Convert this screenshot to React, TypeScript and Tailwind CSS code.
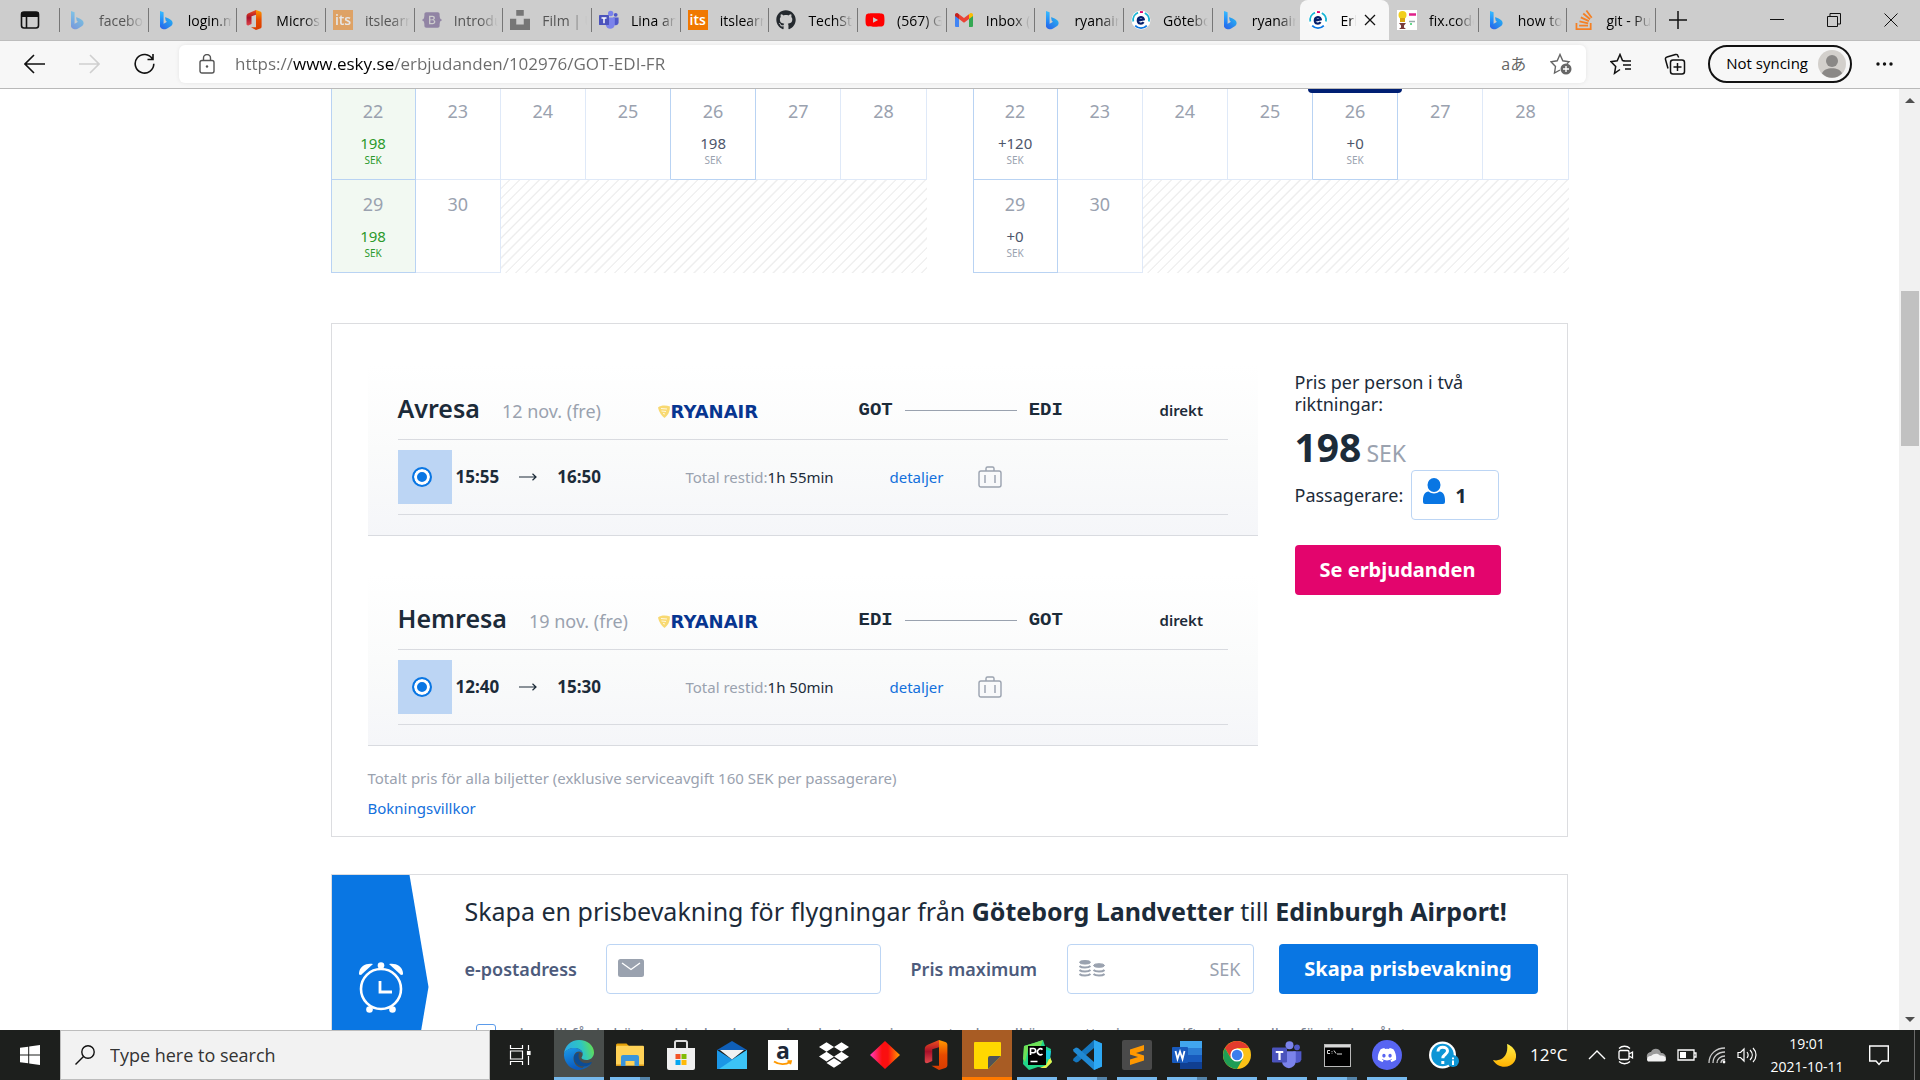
import type { ReactNode } from "react";
import { FaDropbox, FaGithub, FaYoutube, FaDiscord, FaBootstrap } from "react-icons/fa";
import { SiStackoverflow, SiUnsplash } from "react-icons/si";

/* ---------- favicons and app icons ---------- */

const Bing = () => (
  <svg viewBox="0 0 20 20" className="size-5">
    <defs>
      <linearGradient id="bingA" x1="0" y1="0" x2="0" y2="1">
        <stop offset="0" stopColor="#37bdff" />
        <stop offset="1" stopColor="#1b6cf2" />
      </linearGradient>
      <linearGradient id="bingB" x1="1" y1="0" x2="0" y2="1">
        <stop offset="0" stopColor="#26b8f4" />
        <stop offset="1" stopColor="#2a5de8" />
      </linearGradient>
    </defs>
    <path d="M4 1l3.6 1.3v12L4 17z" fill="url(#bingA)" />
    <path d="M9 7.2c3 .8 7.600 2.300 7.600 5.800 0 2.800-2.500 3.600-4.600 4.900-1.500 1-2.800 1.700-4.600 1.400C5.300 19 4 17.600 4 15.500l5-2.600 2-1.200-1.200-.7z" fill="url(#bingB)" />
  </svg>
);

const Office = ({ className = "size-5" }: { className?: string }) => (
  <svg viewBox="0 0 20 20" className={className}>
    <defs>
      <linearGradient id="offA" x1="0" y1="0" x2="0" y2="1">
        <stop offset="0" stopColor="#f0501e" />
        <stop offset=".5" stopColor="#a8102a" />
        <stop offset="1" stopColor="#e0484c" />
      </linearGradient>
      <linearGradient id="offB" x1="0" y1="0" x2="0" y2="1">
        <stop offset="0" stopColor="#ff9a00" />
        <stop offset=".5" stopColor="#e64a00" />
        <stop offset="1" stopColor="#d83b01" />
      </linearGradient>
    </defs>
    <path d="M12 0l-7.500 3.200C3.200 3.800 2.500 4.700 2.500 6v8c0 1.500 1.400 1.700 2.400 1.200L7.500 14V6.200L12 4.800z" fill="url(#offA)" />
    <path d="M12 0l4.200 1.400c1 .4 1.400 1 1.400 2v13.200c0 1-.4 1.600-1.400 2L12 20 7 17.200h5z" fill="url(#offB)" />
  </svg>
);

const Its = ({ className = "size-5" }: { className?: string }) => (
  <span className={`${className} flex shrink-0 items-center justify-center bg-[#f07800] text-[14px] leading-none font-semibold text-white`}>its</span>
);

const Teams = ({ className = "size-5" }: { className?: string }) => (
  <svg viewBox="0 0 24 24" className={className}>
    <circle cx="20" cy="5.800" r="2.300" fill="#5059c9" />
    <path d="M17 9h6.500v6.500a3.500 3.500 0 0 1-6.500 1z" fill="#5059c9" />
    <circle cx="14" cy="4.200" r="3.200" fill="#7b83eb" />
    <path d="M8 9h11v8a5.500 5.500 0 0 1-11 0z" fill="#7b83eb" />
    <rect x="0" y="6" width="12" height="12" rx="1" fill="#4b53bc" />
    <path d="M3 8.800h6v1.600H6.900V16H5.100v-5.600H3z" fill="#fff" />
  </svg>
);

const Gmail = () => (
  <svg viewBox="0 0 20 20" className="size-5">
    <path d="M1 5.500V16a1 1 0 0 0 1 1h3V8.300z" fill="#4285f4" />
    <path d="M19 5.500V16a1 1 0 0 1-1 1h-3V8.300z" fill="#34a853" />
    <path d="M15 4.300V9l4-3V4.800c0-1.700-1.900-2.400-3-1.400z" fill="#fbbc04" />
    <path d="M5 9V4.300L10 8l5-3.700V9l-5 3.800z" fill="#ea4335" />
    <path d="M1 4.800V6l4 3V4.300l-1-.9C2.900 2.400 1 3.100 1 4.800z" fill="#c5221f" />
  </svg>
);

const Esky = () => (
  <svg viewBox="0 0 20 20" className="size-5">
    <circle cx="10" cy="10" r="9.500" fill="#fff" />
    <g fill="none" strokeWidth="1.800">
      <path d="M2.300 11.500A8 8 0 0 1 7 2.600" stroke="#18b5d6" />
      <path d="M13.800 3a8 8 0 0 1 4.100 8.500" stroke="#18b5d6" />
      <path d="M9 2l3 .2" stroke="#e3056d" />
      <path d="M4.200 15.600a8 8 0 0 0 11.600 0" stroke="#0976e3" />
      <path d="M6.800 10.600l6-1.200c-.3-3.400-5.800-3.200-6 1 0 3.600 4 4.200 5.800 1.800" stroke="#041e6b" strokeWidth="2.200" />
    </g>
  </svg>
);

const FixCode = () => (
  <svg viewBox="0 0 20 20" className="size-5">
    <rect width="20" height="20" fill="#fff" />
    <circle cx="5.500" cy="5" r="4" fill="#f2cf1c" />
    <rect x="3" y="8" width="5" height="4" fill="#d9a514" />
    <path d="M2 13h7l-2 2.500v2l2 1.500H2l2-1.500v-2z" fill="#7a3b3b" />
    <path d="M12 4.500h7" stroke="#e0218a" strokeWidth="2.500" />
    <path d="M12 11.500h6" stroke="#9aa" strokeWidth="1.500" />
    <path d="M13 14h2" stroke="#3c6" strokeWidth="1.500" />
  </svg>
);

const EdgeLogo = () => (
  <svg viewBox="0 0 30 30" className="size-[30px]">
    <defs>
      <linearGradient id="edA" x1="0" y1=".5" x2="1" y2=".3">
        <stop offset="0" stopColor="#2aa8ea" />
        <stop offset=".6" stopColor="#2fc6c0" />
        <stop offset="1" stopColor="#66e04c" />
      </linearGradient>
      <linearGradient id="edB" x1="0" y1="0" x2=".3" y2="1">
        <stop offset="0" stopColor="#1c9be8" />
        <stop offset="1" stopColor="#0a5bc0" />
      </linearGradient>
    </defs>
    <path d="M0 14C.5 6 7 0 15 0c9 0 15 6 15 12.500 0 5-4 7.500-7.500 7.500-3.200 0-5-1.200-5-2.200 0-.8 1.200-1.300 1.200-3.800C18.700 10.500 15 8 10.500 8 5 8 1 11 0 14z" fill="url(#edA)" />
    <path d="M0 14c1-3.500 5-6 10.500-6 4.500 0 8.200 2.500 8.200 6 0-1-1.500-2.500-3.700-2.500-3.500 0-5.500 3.500-5.500 7 0 5 4 9.500 9.500 9.500-1.200 1-3 2-5 2C6 29.500-.5 22 0 14z" fill="url(#edB)" />
    <path d="M10 17.500c0 6 5 9 10 9 3 0 6-1.200 7.500-3.500.5-.8 0-1.200-.8-.8-6 2.800-12.200-.7-12.200-6.200 0-1.500.5-2.500 1-3.500-3 .3-5.500 2-5.500 5z" fill="#0c4c94" />
    <path d="M20 26.500c-1.500 1.800-3.500 3-6 3 5 .8 11-2 13.500-6.500-2 2.300-4.500 3.500-7.500 3.500z" fill="#1460ae" />
  </svg>
);

const Explorer = () => (
  <svg viewBox="0 0 30 26" className="h-[26px] w-[30px]">
    <path d="M1 3a1.500 1.500 0 0 1 1.500-1.500h9L14 4h-13z" fill="#e3a008" />
    <rect x="1" y="3.800" width="28" height="20" rx="1" fill="#ffd257" />
    <path d="M6 24v-9a2 2 0 0 1 2-2h14a2 2 0 0 1 2 2v9h-4.500v-5h-9v5z" fill="#3a95dc" />
    <rect x="1" y="22.500" width="5" height="1.500" fill="#d99a1c" />
    <rect x="24" y="22.500" width="5" height="1.500" fill="#d99a1c" />
  </svg>
);

const Store = () => (
  <svg viewBox="0 0 30 30" className="size-[30px]">
    <path d="M9 9V2.500A1.500 1.500 0 0 1 10.500 1h9A1.500 1.500 0 0 1 21 2.500V9" fill="none" stroke="#ddd" strokeWidth="2" />
    <path d="M1 8h28v20a2 2 0 0 1-2 2H3a2 2 0 0 1-2-2z" fill="#f0f0f0" />
    <rect x="9.500" y="14" width="5" height="5" fill="#f35325" />
    <rect x="15.500" y="14" width="5" height="5" fill="#81bc06" />
    <rect x="9.500" y="20" width="5" height="5" fill="#05a6f0" />
    <rect x="15.500" y="20" width="5" height="5" fill="#ffba08" />
  </svg>
);

const Mail = () => (
  <svg viewBox="0 0 30 28" className="h-7 w-[30px]">
    <path d="M0 9L15 0l15 9z" fill="#0f5fb8" />
    <path d="M0 9l15 9.500L30 9v19H0z" fill="#1b96e6" />
    <path d="M30 9v19H2z" fill="#3cc4f6" />
    <path d="M3 9h24L15 18.500z" fill="#f2f2f2" />
  </svg>
);

const Amazon = () => (
  <span className="relative flex size-[30px] items-start justify-center bg-white">
    <span className="text-[23px] leading-[21px] font-bold text-[#1d2838]">a</span>
    <svg viewBox="0 0 20 6" className="absolute bottom-1 h-[6px] w-5">
      <path d="M1 1.500c5 3.500 12 3.500 16 .5M14.500 1.200h3.500l-.8 3" fill="none" stroke="#f90" strokeWidth="1.800" />
    </svg>
  </span>
);

const Diamond = () => (
  <svg viewBox="0 0 30 30" className="size-[30px]">
    <defs>
      <linearGradient id="diaA" x1="0" y1="0" x2="1" y2="0">
        <stop offset="0" stopColor="#ff3cc0" />
        <stop offset=".4" stopColor="#fa0f10" />
        <stop offset=".6" stopColor="#fa0f10" />
        <stop offset="1" stopColor="#ffa000" />
      </linearGradient>
    </defs>
    <path d="M15 1l15 14-15 14L0 15z" fill="url(#diaA)" />
  </svg>
);

const Sticky = () => (
  <svg viewBox="0 0 27 27" className="size-[27px]">
    <path d="M0 1a1 1 0 0 1 1-1h25a1 1 0 0 1 1 1v13L14 27H1a1 1 0 0 1-1-1z" fill="#ffd800" />
    <path d="M27 14H16a2 2 0 0 0-2 2v11z" fill="#4f5358" />
  </svg>
);

const PyCharm = () => (
  <svg viewBox="0 0 30 30" className="size-[30px]">
    <path d="M2 6L12 3l9-3 2 6 6 3-1 8 2 5-6 6-8-1-9 3-6-6z" fill="#21d789" />
    <path d="M2 6L12 3l9-3-3 8-12 2-3 12-2-3z" fill="#6ee055" />
    <path d="M18 28l6 0 6-6-2-5-4 8z" fill="#e8f04a" />
    <path d="M24 10l5 1-1 8-4 0z" fill="#18c9dc" />
    <rect x="6" y="6" width="18" height="19" fill="#000" />
    <path d="M8.500 15V8.500h3a2 2 0 0 1 0 4.200H8.500M20.500 9.600a3 3 0 1 0 0 4.400M8.500 21.500h7" fill="none" stroke="#fff" strokeWidth="1.600" />
  </svg>
);

const VsCode = () => (
  <svg viewBox="0 0 30 30" className="size-[30px]">
    <path d="M22 0l8 3.500v8L22 8 6 22l-2 .5L1 20.500l.5-2z" fill="#1577bf" />
    <path d="M22 30l8-3.500v-8L22 22 6 8l-2-.5L1 9.500l.5 2z" fill="#2089d2" />
    <path d="M22 0l8 3.500v23L22 30z" fill="#2ea8f3" />
  </svg>
);

const Sublime = () => (
  <svg viewBox="0 0 30 30" className="size-[30px]">
    <rect width="30" height="30" rx="2" fill="#4a4a4a" />
    <path d="M22 5v5.500l-8 2.500 8 2.500v5L8 25v-5.500l8-2.500-8-2.500v-5z" fill="#ff9800" />
  </svg>
);

const Word = () => (
  <svg viewBox="0 0 30 28" className="h-7 w-[30px]">
    <path d="M8 0h22v7H8z" fill="#41a5ee" />
    <path d="M8 7h22v7H8z" fill="#2b7cd3" />
    <path d="M8 14h22v7H8z" fill="#185abd" />
    <path d="M8 21h22v7H8z" fill="#103f91" />
    <rect x="0" y="6" width="16" height="16" rx="1" fill="#185abd" />
    <path d="M3.500 10l2 8 2.500-7.500 2.500 7.500 2-8" fill="none" stroke="#fff" strokeWidth="1.800" />
  </svg>
);

const Chrome = () => (
  <svg viewBox="0 0 28 28" className="size-7">
    <circle cx="14" cy="14" r="14" fill="#fbc116" />
    <path d="M14 7h12.100A14 14 0 0 0 1.900 7l6 10z" fill="#e33b2e" />
    <path d="M1.900 7A14 14 0 0 0 14 28l6-10.500-12 0z" fill="#1f9d55" />
    <circle cx="14" cy="14" r="6.600" fill="#fff" />
    <circle cx="14" cy="14" r="5.200" fill="#3b7ded" />
  </svg>
);

const Cmd = () => (
  <svg viewBox="0 0 27 23" className="h-[23px] w-[27px]">
    <rect x=".5" y=".5" width="26" height="22" fill="#000" stroke="#b9b9b9" />
    <path d="M1 1h25v2.500H1z" fill="#d8d8d8" />
    <path d="M6 6.500H3.500v3H6M8 7v.8M8 8.800v.7M10 6.500l2 3M13 10h5" stroke="#ddd" fill="none" />
  </svg>
);

const Help = () => (
  <svg viewBox="0 0 30 28" className="h-7 w-[30px]">
    <circle cx="13.500" cy="14" r="13.500" fill="#fff" />
    <circle cx="13.500" cy="14" r="11.200" fill="#0d96d6" />
    <path d="M9 10.500c0-6 9.500-5.500 9.500-.5 0 3.500-4.700 3.500-4.700 7.200M13.800 20v3" fill="none" stroke="#fff" strokeWidth="3" />
    <circle cx="24" cy="20" r="6" fill="#0d96d6" />
    <path d="M24 16.500v1.800M24 19.500v4.500" stroke="#fff" strokeWidth="2" />
  </svg>
);

/* ---------- browser chrome ---------- */

type Tab = { title: string; icon: ReactNode; asleep?: boolean; active?: boolean };

const tabs: Tab[] = [
  { title: "facebook", icon: <Bing />, asleep: true },
  { title: "login.mi", icon: <Bing /> },
  { title: "Microso", icon: <Office /> },
  { title: "itslearn", icon: <Its />, asleep: true },
  { title: "Introdu", icon: <FaBootstrap className="size-5 text-[#563d7c]" />, asleep: true },
  { title: "Film | U", icon: <SiUnsplash className="size-5 text-[#222]" />, asleep: true },
  { title: "Lina an", icon: <Teams /> },
  { title: "itslearn", icon: <Its /> },
  { title: "TechSta", icon: <FaGithub className="size-5 text-[#24292e]" /> },
  { title: "(567) G", icon: <FaYoutube className="size-5 text-[#f00]" /> },
  { title: "Inbox (", icon: <Gmail /> },
  { title: "ryanair", icon: <Bing /> },
  { title: "Götebo", icon: <Esky /> },
  { title: "ryanair", icon: <Bing /> },
  { title: "Erb", icon: <Esky />, active: true },
  { title: "fix.code", icon: <FixCode /> },
  { title: "how to", icon: <Bing /> },
  { title: "git - Pu", icon: <SiStackoverflow className="size-5 text-[#f48024]" /> },
];

const fade = "[mask-image:linear-gradient(to_right,black_60%,transparent)]";

function TabItem({ tab, sep }: { tab: Tab; sep: boolean }) {
  if (tab.active) {
    return (
      <div className="flex h-10 min-w-0 flex-1 items-center rounded-t-lg bg-[#f7f7f7]">
        <span className="ml-2 shrink-0">{tab.icon}</span>
        <span className={`ml-3 w-4 overflow-hidden whitespace-nowrap ${fade}`}>{tab.title}</span>
        <button aria-label="Close tab" className="ml-1 flex size-5 shrink-0 items-center justify-center">
          <svg viewBox="0 0 12 12" className="size-3" stroke="#111" strokeWidth="1.300">
            <path d="M1 1l10 10M11 1L1 11" />
          </svg>
        </button>
      </div>
    );
  }
  return (
    <button className="flex h-10 min-w-0 flex-1 items-center">
      <span className={`h-6 w-px shrink-0 ${sep ? "bg-[#777]" : "bg-transparent"}`} />
      <span className={`ml-[7px] shrink-0 ${tab.asleep ? "opacity-50" : ""}`}>{tab.icon}</span>
      <span className={`ml-3 mr-1 min-w-0 flex-1 overflow-hidden text-left whitespace-nowrap ${fade} ${tab.asleep ? "text-[#555]" : ""}`}>
        {tab.title}
      </span>
    </button>
  );
}

function TabStrip() {
  return (
    <div className="flex h-10 shrink-0 items-center bg-[#cdcdcd] text-[14px] text-black">
      <button aria-label="Tab actions" className="flex w-[59px] shrink-0 items-center justify-center">
        <svg viewBox="0 0 20 20" className="size-5" fill="none" stroke="#111" strokeWidth="1.600">
          <rect x="1.500" y="2" width="17" height="16" rx="2.500" />
          <path d="M1.500 4.500h17" strokeWidth="5" />
          <path d="M6.500 6v12" />
        </svg>
      </button>
      <div className="flex max-w-[1596px] min-w-0 flex-1">
        {tabs.map((t, i) => (
          <TabItem key={i} tab={t} sep={!tabs[i - 1]?.active} />
        ))}
      </div>
      <span className="h-6 w-px bg-[#777]" />
      <button aria-label="New tab" className="ml-[13px]">
        <svg viewBox="0 0 18 18" className="size-[18px]" stroke="#111" strokeWidth="1.500">
          <path d="M9 0v18M0 9h18" />
        </svg>
      </button>
      <div className="ml-auto flex items-center gap-[43px] pr-[22px]">
        <button aria-label="Minimize">
          <svg viewBox="0 0 14 14" className="size-[14px]" stroke="#111"><path d="M0 6.500h14" /></svg>
        </button>
        <button aria-label="Restore">
          <svg viewBox="0 0 14 14" className="size-[14px]" fill="none" stroke="#111">
            <path d="M.5 3.500h10v10H.5zM3 3V.5h10.500V11H11" />
          </svg>
        </button>
        <button aria-label="Close">
          <svg viewBox="0 0 14 14" className="size-[14px]" stroke="#111"><path d="M.5.500l13 13M13.500.500l-13 13" /></svg>
        </button>
      </div>
    </div>
  );
}

function Toolbar() {
  return (
    <div className="flex h-[49px] shrink-0 items-center border-t border-b border-t-[#bdbdbd] border-b-[#b9b9b9] bg-[#f7f7f7] pr-[27px] pb-[2px] pl-6">
      <button aria-label="Back">
        <svg viewBox="0 0 21 20" className="h-5 w-[21px]" fill="none" stroke="#111" strokeWidth="1.600"><path d="M21 10H1.500M10 1l-9 9 9 9" /></svg>
      </button>
      <button aria-label="Forward" className="ml-[34px]" disabled>
        <svg viewBox="0 0 21 20" className="h-5 w-[21px]" fill="none" stroke="#cfcfcf" strokeWidth="1.600"><path d="M0 10h19.500M11 1l9 9-9 9" /></svg>
      </button>
      <button aria-label="Refresh" className="ml-[34px]">
        <svg viewBox="0 0 21 21" className="size-[21px]" fill="none" stroke="#111" strokeWidth="1.600"><path d="M18.500 6a9.300 9.300 0 1 0 1.300 4.700M19 1v5.500h-5.500" /></svg>
      </button>
      <div className="ml-6 flex h-[38px] min-w-0 flex-1 items-center rounded-md bg-white pr-[14px] pl-5 shadow-[0_0_4px_rgba(0,0,0,0.08)]">
        <svg viewBox="0 0 16 20" className="h-5 w-4 shrink-0" fill="none" stroke="#555" strokeWidth="1.400">
          <rect x="1" y="6.500" width="14" height="12.500" rx="2" />
          <path d="M4.500 6.500V4a3.500 3.500 0 0 1 7 0v2.500" />
          <circle cx="8" cy="12.500" r="1.200" fill="#555" stroke="none" />
        </svg>
        <input
          aria-label="Address"
          defaultValue="https://www.esky.se/erbjudanden/102976/GOT-EDI-FR"
          className="ml-5 min-w-0 flex-1 bg-[linear-gradient(to_right,#6b6b6b_58px,#000_58px,#000_159px,#6b6b6b_159px)] bg-clip-text text-[17px] text-transparent outline-none"
        />
        <button aria-label="Translate" className="text-[16px] leading-none text-[#666]">aあ</button>
        <button aria-label="Add to favorites" className="ml-6">
          <svg viewBox="0 0 22 22" className="size-[22px]" fill="none" stroke="#666" strokeWidth="1.400">
            <path d="M10 17l-5.500 3 1-6.500L1 8.700l6.200-.9L10 1.500l2.800 6.300 6.200.9-2 2" />
            <circle cx="16" cy="16" r="5.500" fill="#666" stroke="none" />
            <path d="M16 13v6M13 16h6" stroke="#fff" />
          </svg>
        </button>
      </div>
      <button aria-label="Favorites" className="ml-6">
        <svg viewBox="0 0 22 22" className="size-[22px]" fill="none" stroke="#111" strokeWidth="1.500">
          <path d="M10 16.500l-5.500 3.800 1.200-6.800L1 8.700l6.200-.9L10 1.500l2.500 6 2 .3M13 8h8M13 12h8M15 16h6" />
        </svg>
      </button>
      <button aria-label="Collections" className="ml-8">
        <svg viewBox="0 0 22 22" className="size-[22px]" fill="none" stroke="#111" strokeWidth="1.500">
          <rect x="6.500" y="7" width="14" height="14" rx="2.500" />
          <path d="M13.500 10v8M9.500 14h8M4 15.500L1.500 6.500A2 2 0 0 1 3 4l8.500-2.500A2 2 0 0 1 14 3l.7 1.500" />
        </svg>
      </button>
      <button className="ml-[22px] flex h-[38px] items-center rounded-full border-2 border-[#111] pr-1 pl-4 text-[15px] text-black">
        Not syncing
        <svg viewBox="0 0 28 28" className="ml-[10px] size-7">
          <circle cx="14" cy="14" r="14" fill="#d3d0cc" />
          <circle cx="14" cy="11" r="6" fill="#8a8886" />
          <path d="M4 23.500c2-7 18-7 20 0a14 14 0 0 1-20 0z" fill="#8a8886" />
        </svg>
      </button>
      <button aria-label="Settings and more" className="ml-6">
        <svg viewBox="0 0 17 4" className="h-1 w-[17px]" fill="#111"><circle cx="2" cy="2" r="1.700" /><circle cx="8.500" cy="2" r="1.700" /><circle cx="15" cy="2" r="1.700" /></svg>
      </button>
    </div>
  );
}

/* ---------- price calendar ---------- */

type Day = { day: number; price?: string; cheap?: boolean; selected?: boolean };

function DayCell({ d, next, first, top }: { d: Day; next?: Day; first: boolean; top: boolean }) {
  const priced = d.price !== undefined;
  const right = priced || next?.price !== undefined ? "border-r-[#b9d3f3]" : "border-r-[#dfe9f8]";
  const bottom = priced ? "border-b-[#b9d3f3]" : "border-b-[#dfe9f8]";
  return (
    <td className={`relative border-r border-b p-0 align-top ${right} ${bottom} ${first ? "border-l border-l-[#b9d3f3]" : ""} ${d.cheap ? "bg-[#f2f9f2]" : ""}`}>
      {d.selected && <span className="absolute inset-x-[-5px] top-0 h-1 rounded-b-md bg-[#001f73]" />}
      <div className={`text-center ${top ? "h-[90px] pt-[10px]" : "h-[92px] pt-3"}`}>
        <div className="text-[18px] leading-6 text-[#9aa2af]">{d.day}</div>
        {priced && (
          <>
            <div className={`mt-[10px] text-[15px] leading-5 ${d.cheap ? "text-[#2c9a2c]" : "text-[#4d566b]"}`}>{d.price}</div>
            <div className={`text-[10px] leading-[14px] ${d.cheap ? "text-[#2c9a2c]" : "text-[#9aa2af]"}`}>SEK</div>
          </>
        )}
      </div>
    </td>
  );
}

function Calendar({ label, weeks }: { label: string; weeks: Day[][] }) {
  return (
    <table aria-label={label} className="w-full table-fixed border-separate border-spacing-0">
      <tbody>
        {weeks.map((week, i) => (
          <tr key={i}>
            {week.map((d, j) => (
              <DayCell key={d.day} d={d} next={week[j + 1]} first={j === 0} top={i === 0} />
            ))}
            {week.length < 7 && (
              <td colSpan={7 - week.length} className="bg-[repeating-linear-gradient(135deg,#fff_0px,#fff_5px,#ededed_6px,#f6f6f6_7px)]" />
            )}
          </tr>
        ))}
      </tbody>
    </table>
  );
}

const outbound: Day[][] = [
  [{ day: 22, price: "198", cheap: true }, { day: 23 }, { day: 24 }, { day: 25 }, { day: 26, price: "198" }, { day: 27 }, { day: 28 }],
  [{ day: 29, price: "198", cheap: true }, { day: 30 }],
];
const inbound: Day[][] = [
  [{ day: 22, price: "+120" }, { day: 23 }, { day: 24 }, { day: 25 }, { day: 26, price: "+0", selected: true }, { day: 27 }, { day: 28 }],
  [{ day: 29, price: "+0" }, { day: 30 }],
];

/* ---------- flight offer ---------- */

type LegData = { title: string; date: string; from: string; to: string; dep: string; arr: string; time: string };

const legs: LegData[] = [
  { title: "Avresa", date: "12 nov. (fre)", from: "GOT", to: "EDI", dep: "15:55", arr: "16:50", time: "1h 55min" },
  { title: "Hemresa", date: "19 nov. (fre)", from: "EDI", to: "GOT", dep: "12:40", arr: "15:30", time: "1h 50min" },
];

function Leg({ leg }: { leg: LegData }) {
  return (
    <section className="border-b border-[#d9dbe0] bg-linear-to-b from-white via-[#fafbfb] to-[#f5f6f9] px-[30px] pb-5">
      <div className="grid h-[75px] grid-cols-[260fr_201fr_301fr_68fr] items-baseline border-b border-[#d9dbe0] pt-[25px]">
        <div className="flex items-baseline gap-[22px] whitespace-nowrap">
          <h2 className="text-[25px] leading-9 font-semibold text-[#1c2b39]">{leg.title}</h2>
          <span className="text-[18px] text-[#9aa2af]">{leg.date}</span>
        </div>
        <div className="flex items-baseline font-['DejaVu_Sans',sans-serif] text-[18px] leading-6 font-bold text-[#073590]">
          <svg viewBox="0 0 12 13" className="mr-px h-[13px] w-3" fill="#f6d04d">
            <path d="M0 2.500C3 0 8 0 12 1.500c0 5-2 9-5.500 11.500C4 11 1 7.500 0 2.500z" opacity=".8" />
            <path d="M3 3.500l6 .5M3.500 6l4.500.5M5 8.500l2 .5" stroke="#fff" strokeWidth=".8" />
          </svg>
          RYANAIR
        </div>
        <div className="flex h-10 items-center gap-3 self-start font-['Liberation_Mono',monospace] text-[19px] font-bold text-[#1c2b39]">
          {leg.from}
          <span className="h-px w-28 bg-[#9aa2af]" />
          {leg.to}
        </div>
        <span className="self-start text-[15px] leading-10 font-semibold text-[#1c2b39]">direkt</span>
      </div>
      <div className="grid h-[75px] grid-cols-[288fr_204fr_88fr_250fr] items-center border-b border-[#d9dbe0] text-[15px]">
        <div className="flex items-center text-[17px] font-bold text-[#1c2b39]">
          <label className="flex size-[54px] items-center bg-[#bcd5f4] pl-[14px]">
            <input
              type="radio"
              name={leg.title}
              defaultChecked
              aria-label={`${leg.dep} – ${leg.arr}`}
              className="size-5 appearance-none rounded-full border-2 border-[#0976e3] bg-[#0976e3] shadow-[inset_0_0_0_3px_white]"
            />
          </label>
          <span className="ml-1">{leg.dep}</span>
          <svg viewBox="0 0 18 8" className="mx-5 h-2 w-[18px]" fill="none" stroke="#1c2b39" strokeWidth="1.200">
            <path d="M0 4h17M13.500.800L17 4l-3.500 3.200" />
          </svg>
          <span>{leg.arr}</span>
        </div>
        <span className="text-[#1c2b39]"><span className="text-[#9aa2af]">Total restid:</span>{leg.time}</span>
        <a href="#detaljer" className="text-[#1270dc]">detaljer</a>
        <svg viewBox="0 0 24 22" className="h-[22px] w-6" fill="none" stroke="#9aa2af" strokeWidth="1.400">
          <rect x="1" y="5" width="22" height="16" rx="2" />
          <path d="M8 5V2.500A1.500 1.500 0 0 1 9.500 1h5A1.500 1.500 0 0 1 16 2.500V5M7 9v8M17 9v8" />
        </svg>
      </div>
    </section>
  );
}

function Offer() {
  return (
    <div className="mt-[50px] border border-[#dcdde0] px-9 pt-[41px] pb-4">
      <div className="flex gap-[37px]">
        <div className="flex min-w-0 flex-1 flex-col gap-[39px]">
          {legs.map((l) => <Leg key={l.title} leg={l} />)}
        </div>
        <div className="w-[236px] shrink-0 pt-[6px] text-[18px] text-[#1c2b39]">
          <p className="max-w-[206px] leading-[22px]">Pris per person i två riktningar:</p>
          <p className="mt-[7px] flex h-12 items-baseline">
            <strong className="text-[39px] leading-[50px] font-bold">198</strong>
            <span className="ml-[5px] text-[23px] leading-8 text-[#9aa2af]">SEK</span>
          </p>
          <div className="flex items-center gap-2">
            <label htmlFor="pax">Passagerare:</label>
            <div className="relative">
              <svg viewBox="0 0 22 26" className="absolute top-2 left-3 h-[26px] w-[22px]" fill="#0976e3">
                <ellipse cx="11" cy="7" rx="6.500" ry="7" />
                <path d="M0 22c0-5 2-8 5.500-8.500 3 2.600 8 2.600 11 0C20 14 22 17 22 22v2a2 2 0 0 1-2 2H2a2 2 0 0 1-2-2z" />
              </svg>
              <input id="pax" defaultValue="1" className="block h-[50px] w-[88px] rounded-[4px] border border-[#bcd5f4] pl-[43px] text-[20px] font-bold outline-none" />
            </div>
          </div>
          <button className="mt-[25px] h-[50px] w-[206px] rounded-[4px] bg-[#e3056d] text-[20px] font-bold text-white">Se erbjudanden</button>
        </div>
      </div>
      <p className="mt-5 text-[15px] leading-6 text-[#9aa2af]">Totalt pris för alla biljetter (exklusive serviceavgift 160 SEK per passagerare)</p>
      <a href="#villkor" className="mt-[6px] inline-block text-[15px] leading-6 text-[#1270dc]">Bokningsvillkor</a>
    </div>
  );
}

/* ---------- price alert ---------- */

function PriceAlert() {
  return (
    <form className="mt-[37px] flex border border-[#dcdde0]">
      <div className="flex h-[224px] w-[97px] shrink-0 items-center bg-[#0976e3] pl-[27px] [clip-path:polygon(0_0,78px_0,97px_112px,78px_224px,0_224px)]">
        <svg viewBox="0 0 44 51" className="h-[51px] w-11" fill="#fff">
          <ellipse cx="22" cy="27" rx="20" ry="20" fill="none" stroke="#fff" strokeWidth="2.600" />
          <path d="M21 19v11h12" fill="none" stroke="#fff" strokeWidth="2.800" />
          <path d="M0 12.500C-.5 4 8 .5 14 2L2 13z" />
          <path d="M44 12.500C44.500 4 36 .5 30 2l12 11z" />
          <circle cx="22" cy="3.500" r="3.300" />
          <circle cx="10.500" cy="47.500" r="3.300" />
          <circle cx="33.500" cy="47.500" r="3.300" />
        </svg>
      </div>
      <div className="min-w-0 flex-1 pt-[18px] pr-[29px] pl-9 text-[#1c2b39]">
        <h2 className="text-[25px] leading-9 whitespace-nowrap">
          Skapa en prisbevakning för flygningar från <strong className="font-bold">Göteborg Landvetter</strong> till{" "}
          <strong className="font-bold">Edinburgh Airport!</strong>
        </h2>
        <div className="mt-[15px] flex items-center text-[18px] text-[#4d5b7c]">
          <label htmlFor="email" className="w-[141px] font-semibold">e-postadress</label>
          <div className="relative min-w-0 flex-[275]">
            <svg viewBox="0 0 26 18" className="absolute top-[15px] left-3 h-[18px] w-[26px]">
              <rect width="26" height="18" rx="2.500" fill="#9aa2af" />
              <path d="M4 4l9 6.500L22 4" fill="none" stroke="#fff" strokeWidth="1.400" />
            </svg>
            <input id="email" type="email" className="block h-[50px] w-full rounded-[4px] border border-[#bcd5f4] pl-[46px] outline-none" />
          </div>
          <label htmlFor="max" className="ml-[30px] w-[156px] font-semibold">Pris maximum</label>
          <div className="relative min-w-0 flex-[187]">
            <svg viewBox="0 0 26 17" className="absolute top-4 left-3 h-[17px] w-[26px]" fill="none" stroke="#9aa2af" strokeWidth="2">
              <ellipse cx="6" cy="2.300" rx="5.500" ry="1.800" fill="#9aa2af" strokeWidth="1" />
              <path d="M.5 6c2 2 9 2 11 0M.5 10c2 2 9 2 11 0M.5 14c2 2 9 2 11 0" />
              <ellipse cx="20" cy="5.500" rx="5.500" ry="1.800" fill="#9aa2af" strokeWidth="1" />
              <path d="M14.500 10c2 2 9 2 11 0M14.500 14c2 2 9 2 11 0" />
            </svg>
            <input id="max" placeholder="SEK" className="block h-[50px] w-full rounded-[4px] border border-[#bcd5f4] pr-3 pl-11 text-right outline-none placeholder:text-[#9aa2af]" />
          </div>
          <button type="button" className="ml-[25px] h-[50px] w-[259px] shrink-0 rounded-[4px] bg-[#0976e3] text-[20px] font-bold text-white">Skapa prisbevakning</button>
        </div>
        <label className="mt-[30px] flex items-center pl-[11px] text-[16px] leading-5 whitespace-nowrap text-[#7c8494]">
          <input type="checkbox" className="mr-6 size-5 shrink-0 appearance-none rounded-[3px] border border-[#5b9bea] bg-white" />
          Jag vill få de bästa erbjudandena och nyheterna via e-post och godkänner att mina uppgifter behandlas för ändamålet
        </label>
      </div>
    </form>
  );
}

/* ---------- taskbar ---------- */

type App = { name: string; icon: ReactNode; open?: boolean; multi?: boolean; state?: "focus" | "alert" };

const pinned: App[] = [
  { name: "Edge", icon: <EdgeLogo />, open: true, state: "focus" },
  { name: "File Explorer", icon: <Explorer />, open: true, multi: true },
  { name: "Microsoft Store", icon: <Store /> },
  { name: "Mail", icon: <Mail /> },
  { name: "Amazon", icon: <Amazon /> },
  { name: "Dropbox", icon: <FaDropbox className="size-[30px] text-white" /> },
  { name: "Diamond", icon: <Diamond /> },
  { name: "Office", icon: <Office className="size-[30px]" /> },
  { name: "Sticky Notes", icon: <Sticky />, open: true, state: "alert" },
];
const running: App[] = [
  { name: "PyCharm", icon: <PyCharm />, open: true },
  { name: "Visual Studio Code", icon: <VsCode />, open: true, multi: true },
  { name: "Sublime Text", icon: <Sublime />, open: true },
  { name: "Word", icon: <Word />, open: true, multi: true },
  { name: "Chrome", icon: <Chrome />, open: true },
  { name: "Teams", icon: <Teams className="size-[30px]" />, open: true },
  { name: "Command Prompt", icon: <Cmd />, open: true, multi: true },
  {
    name: "Discord",
    icon: <span className="flex size-[30px] items-center justify-center rounded-full bg-[#5865f2]"><FaDiscord className="size-5 text-white" /></span>,
    open: true,
  },
];

function AppButton({ app }: { app: App }) {
  const bg = app.state === "focus" ? "bg-[#494e4c]" : app.state === "alert" ? "bg-[#a85c24]" : "";
  const bar = app.state === "focus" ? "inset-x-0 bg-[#76b9ed]" : app.state === "alert" ? "inset-x-0 bg-[#ff7a00]" : "inset-x-[5px] bg-[#76b9ed]";
  return (
    <button aria-label={app.name} className={`relative flex h-[50px] w-[50px] shrink-0 items-center justify-center ${bg}`}>
      {app.icon}
      {app.open && (
        <span className={`absolute bottom-0 flex h-[3px] justify-end ${bar}`}>
          {app.multi && <span className="h-[3px] w-[10px] bg-[#5483a8]" />}
        </span>
      )}
    </button>
  );
}

function Taskbar() {
  return (
    <div className="flex h-[50px] shrink-0 items-center bg-[#1d1f1d] text-white">
      <button aria-label="Start" className="flex w-[60px] shrink-0 items-center justify-center">
        <svg viewBox="0 0 20 20" className="size-5" fill="#fff">
          <path d="M0 2.800L8.200 1.700v7.800H0zM9.200 1.500L20 0v9.500H9.200zM0 10.500h8.200v7.800L0 17.200zM9.200 10.500H20V20L9.200 18.500z" />
        </svg>
      </button>
      <div className="flex h-[50px] w-[430px] items-center border border-[#bdbdbd] bg-[#f2f2f2] pl-[14px]">
        <svg viewBox="0 0 20 20" className="size-5 shrink-0" fill="none" stroke="#111" strokeWidth="1.400">
          <circle cx="13" cy="7" r="6.200" />
          <path d="M8.500 11.500L.500 19.500" />
        </svg>
        <input aria-label="Search" placeholder="Type here to search" className="ml-[15px] min-w-0 flex-1 bg-transparent text-[18px] outline-none placeholder:text-[#333]" />
      </div>
      <button aria-label="Task View" className="ml-[19px] mr-[23px]">
        <svg viewBox="0 0 22 20" className="h-5 w-[22px]" fill="none" stroke="#fff" strokeWidth="1.200">
          <path d="M1.500 0v3.500h12V0M1.500 6h12v8h-12zM1.500 20v-3.500h12V20M19.500 0v5M19.500 11v9" />
          <rect x="18.500" y="6.500" width="2.500" height="3" fill="#fff" />
        </svg>
      </button>
      <div className="flex gap-px">{pinned.map((a) => <AppButton key={a.name} app={a} />)}</div>
      <div className="flex">{running.map((a) => <AppButton key={a.name} app={a} />)}</div>
      <button aria-label="Help" className="ml-[17px]"><Help /></button>
      <div className="ml-auto flex items-center">
        <svg viewBox="0 0 23 23" className="size-[23px]">
          <defs>
            <linearGradient id="moon" x1="0" y1="0" x2="0" y2="1"><stop offset="0" stopColor="#fff04a" /><stop offset="1" stopColor="#ffb000" /></linearGradient>
          </defs>
          <path d="M14 0c11 4 12 17 3 21.500C11 24.500 3 22 0 16c8 2 16-4 14-16z" fill="url(#moon)" />
        </svg>
        <span className="ml-[14px] w-[36px] text-[17px] whitespace-nowrap">12°C</span>
        <div className="ml-[22px] flex items-center gap-[11px]">
          <svg viewBox="0 0 18 18" className="size-[18px]" fill="none" stroke="#fff" strokeWidth="1.400"><path d="M1 13l8-8 8 8" /></svg>
          <svg viewBox="0 0 18 20" className="h-5 w-[18px]" fill="none" stroke="#fff" strokeWidth="1.300">
            <rect x="2" y="5.500" width="10" height="9" rx="1.500" /><path d="M12 9l3.500-2v6L12 11M2 3.500c3-3 8-3 11 0M2 16.500c3 3 8 3 11 0" />
          </svg>
          <svg viewBox="0 0 20 14" className="h-[14px] w-5">
            <path d="M1 10C0 6 3 4 5 4c2-5 9-4 10 1 3 0 5 2 5 5z" fill="#9b9b9b" />
            <path d="M2 13.500C-.5 11 2 7.500 5 8c3-3 7-3 9-.5 3-.5 6 1 6 3.500a2.500 2.500 0 0 1-2.500 2.500z" fill="#f2f2f2" />
          </svg>
          <svg viewBox="0 0 20 12" className="h-3 w-5" fill="none" stroke="#fff" strokeWidth="1.300">
            <path d="M1 1h16v10H1zM17 4h2v4h-2" /><rect x="3" y="3" width="6" height="6" fill="#fff" stroke="none" />
          </svg>
          <svg viewBox="0 0 18 18" className="size-[18px]" fill="none" stroke="#ccc" strokeWidth="1.300">
            <path d="M1 17C1 8 8 2 17 2M5 17c0-6.500 5-11 12-11M9 17c0-4 3.500-7 8-7M13 17c0-2 1.500-3.500 4-3.500" /><circle cx="16" cy="16" r="1.400" fill="#fff" stroke="none" />
          </svg>
          <svg viewBox="0 0 21 18" className="h-[18px] w-[21px]" fill="none" stroke="#fff" strokeWidth="1.200">
            <path d="M1 6.500h2.500L7 3v12l-3.500-3.500H1zM10 6c1.500 2 1.500 4 0 6M13 4c3 3 3 7 0 10M16 2c4 4 4 10 0 14" />
          </svg>
        </div>
        <div className="ml-[11px] w-[76px] text-center text-[14px] leading-[23px] whitespace-nowrap">
          <div>19:01</div>
          <div>2021-10-11</div>
        </div>
        <button aria-label="Notifications" className="ml-6">
          <svg viewBox="0 0 20 21" className="h-[21px] w-5" fill="none" stroke="#fff" strokeWidth="1.400"><path d="M.700 1h18.600v15H13l-3 3.500L7 16H.700z" /></svg>
        </button>
        <span className="ml-[25px] h-[50px] w-px bg-[#6a6a6a]" />
        <span className="w-[5px]" />
      </div>
    </div>
  );
}

/* ---------- page ---------- */

function Scrollbar() {
  return (
    <div className="flex w-[21px] shrink-0 flex-col items-center bg-[#f1f1f1]">
      <svg viewBox="0 0 10 5" className="mt-[9px] h-[5px] w-[10px] shrink-0" fill="#505050"><path d="M0 5l5-5 5 5z" /></svg>
      <span className="mt-[188px] h-[155px] w-[18px] bg-[#c1c1c1]" />
      <svg viewBox="0 0 10 5" className="mt-auto mb-2 h-[5px] w-[10px] shrink-0" fill="#505050"><path d="M0 0h10L5 5z" /></svg>
    </div>
  );
}

export default function App() {
  return (
    <div className="flex h-screen flex-col overflow-hidden bg-white font-['Open_Sans','Noto_Sans_CJK_JP',sans-serif]">
      <TabStrip />
      <Toolbar />
      <div className="flex min-h-0 flex-1">
        <main className="min-w-0 flex-1 overflow-hidden font-['Noto_Sans',sans-serif]">
          <div className="mx-auto max-w-[1238px]">
            <div className="flex gap-[46px]">
              <Calendar label="Avresa november" weeks={outbound} />
              <Calendar label="Hemresa november" weeks={inbound} />
            </div>
            <div className="pr-px">
              <Offer />
              <PriceAlert />
            </div>
          </div>
        </main>
        <Scrollbar />
      </div>
      <Taskbar />
    </div>
  );
}
